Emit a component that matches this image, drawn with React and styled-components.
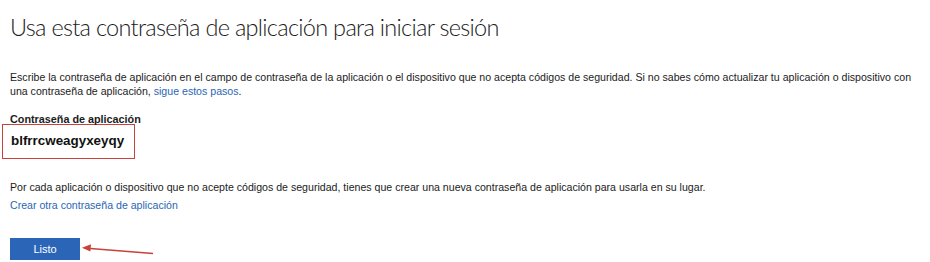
import React from "react";
import styled, { createGlobalStyle } from "styled-components";

const Global = createGlobalStyle`
  html, body { margin: 0; padding: 0; background: #fff; }
  body { font-family: "Liberation Sans", Arial, sans-serif; color: #1a1a1a; }
`;

const Page = styled.div`
  position: relative;
  width: 930px;
  height: 262px;
  overflow: hidden;
  padding: 0 0 0 10px;
  box-sizing: border-box;
`;

const Title = styled.h1`
  margin: 0;
  padding-top: 13px;
  font-family: "Lato", "Liberation Sans", sans-serif;
  font-weight: 300;
  font-size: 23.5px;
  line-height: 28px;
  letter-spacing: -0.7px;
  color: #1b1b1b;
`;

const Text = styled.p`
  margin: ${(p) => p.$mt || 0}px 0 0;
  width: 912px;
  font-size: 10.6px;
  line-height: 14px;
  color: #1b1b1b;
`;

const Link = styled.a`
  color: #2a66b3;
  text-decoration: none;
  cursor: pointer;
`;

const Block = styled.div`
  margin-top: ${(p) => p.$mt || 0}px;
  font-size: 10.6px;
  line-height: 14px;
`;

const FieldLabel = styled.div`
  margin-top: 15px;
  font-weight: 700;
  font-size: 10.8px;
  line-height: 13px;
  color: #1b1b1b;
`;

const Highlight = styled.div`
  margin-left: -8px;
  width: 133px;
  height: 35px;
  box-sizing: border-box;
  border: 1.5px solid #c8413a;
  padding: 0 0 0 8px;
  display: flex;
  align-items: center;
  margin-top: -2px;
`;

const Secret = styled.span`
  font-weight: 700;
  font-size: 13.4px;
  color: #111;
  margin-top: -2px;
`;

const Button = styled.button`
  margin-top: 26px;
  width: 70px;
  height: 22px;
  border: none;
  background: #2b65b8;
  color: #fff;
  font-family: "Liberation Sans", Arial, sans-serif;
  font-size: 11px;
  padding: 0;
`;

const Arrow = styled.svg`
  position: absolute;
  left: 80px;
  top: 240px;
`;

export default function App() {
  return (
    <>
      <Global />
      <Page>
        <Title>Usa esta contraseña de aplicación para iniciar sesión</Title>
        <Text $mt={29}>
          Escribe la contraseña de aplicación en el campo de contraseña de la aplicación o el dispositivo que no acepta códigos de seguridad. Si no sabes cómo actualizar tu aplicación o dispositivo con una contraseña de aplicación, <Link>sigue estos pasos</Link>.
        </Text>
        <FieldLabel>Contraseña de aplicación</FieldLabel>
        <Highlight>
          <Secret>blfrrcweagyxeyqy</Secret>
        </Highlight>
        <Text $mt={21}>
          Por cada aplicación o dispositivo que no acepte códigos de seguridad, tienes que crear una nueva contraseña de aplicación para usarla en su lugar.
        </Text>
        <Block $mt={4}>
          <Link>Crear otra contraseña de aplicación</Link>
        </Block>
        <Button>Listo</Button>
        <Arrow width="80" height="20" viewBox="0 0 80 20">
          <line x1="4" y1="8" x2="73" y2="13.5" stroke="#c8413a" strokeWidth="1.6" />
          <path d="M2 7.8 L11 4.2 L10.3 11.6 Z" fill="#c8413a" />
        </Arrow>
      </Page>
    </>
  );
}
